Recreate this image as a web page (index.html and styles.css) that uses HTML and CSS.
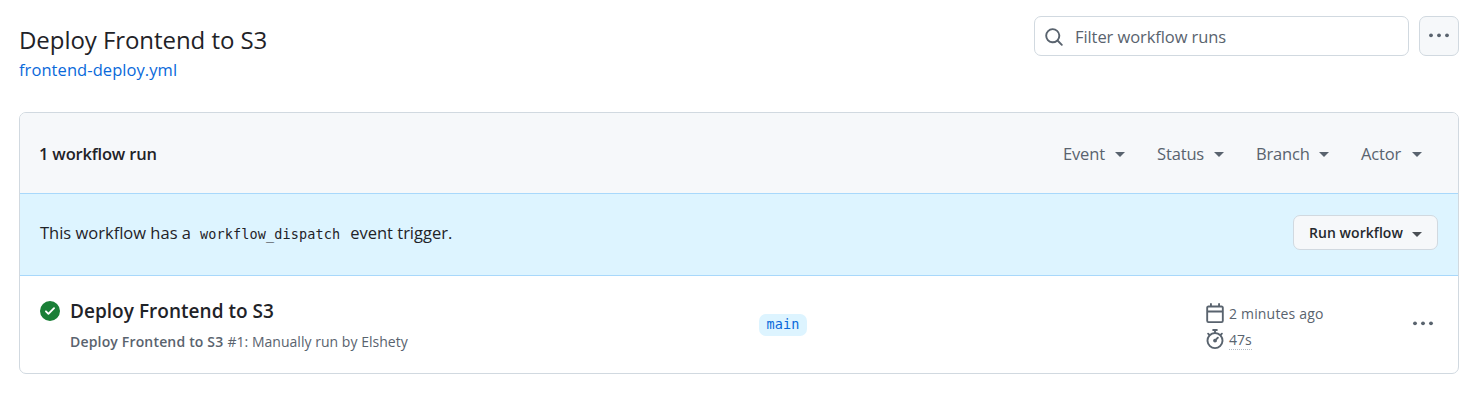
FILE: index.html
```html
<!DOCTYPE html>
<html lang="en">
<head>
<meta charset="utf-8">
<title>Workflow runs</title>
<link rel="stylesheet" href="styles.css">
</head>
<body>
<header class="page-head">
  <div class="heading">
    <h1 class="title"><span class="t">Deploy Frontend to S3</span></h1>
    <a class="file"><span class="t">frontend-deploy.yml</span></a>
  </div>
  <div class="tools">
    <div class="search">
      <svg class="icon" width="20" height="20" viewBox="0 0 16 16"><path d="M10.68 11.74a6 6 0 0 1-7.922-8.982 6 6 0 0 1 8.982 7.922l3.04 3.04a.749.749 0 0 1-.326 1.275.749.749 0 0 1-.734-.215ZM11.5 7a4.499 4.499 0 1 0-8.997 0A4.499 4.499 0 0 0 11.5 7Z"/></svg>
      <span class="placeholder t">Filter workflow runs</span>
    </div>
    <button class="kebab-button"><svg class="icon" width="24" height="20" viewBox="0 0 24 20"><circle cx="4" cy="10.3" r="1.9"/><circle cx="12" cy="10.3" r="1.9"/><circle cx="20" cy="10.3" r="1.9"/></svg></button>
  </div>
</header>
<main class="box">
  <div class="box-head">
    <strong class="count"><span class="t">1 workflow run</span></strong>
    <nav class="filters">
      <span class="filter event"><span class="t">Event</span><i class="caret"></i></span>
      <span class="filter status"><span class="t">Status</span><i class="caret"></i></span>
      <span class="filter branch-filter"><span class="t">Branch</span><i class="caret"></i></span>
      <span class="filter actor"><span class="t">Actor</span><i class="caret"></i></span>
    </nav>
  </div>
  <div class="dispatch">
    <p class="notice"><span class="t lead">This workflow has a</span><code class="code t">workflow_dispatch</code><span class="t">event trigger.</span></p>
    <button class="run"><span class="t">Run workflow</span><i class="caret"></i></button>
  </div>
  <div class="row">
    <svg class="check" width="20" height="20" viewBox="0 0 16 16"><path d="M8 16A8 8 0 1 1 8 0a8 8 0 0 1 0 16Zm3.78-9.72a.751.751 0 0 0-.018-1.042.751.751 0 0 0-1.042-.018L6.75 9.19 5.28 7.72a.751.751 0 0 0-1.042.018.751.751 0 0 0-.018 1.042l2 2a.75.75 0 0 0 1.06 0Z"/></svg>
    <div class="run-info">
      <div class="run-title"><span class="t">Deploy Frontend to S3</span></div>
      <div class="run-sub"><b class="t">Deploy Frontend to S3</b><span class="t">#1: Manually run by Elshety</span></div>
    </div>
    <div class="branch-col"><span class="branch">main</span></div>
    <div class="meta">
      <div class="meta-line"><svg class="icon" width="20" height="20" viewBox="0 0 16 16"><path d="M4.75 0a.75.75 0 0 1 .75.75V2h5V.75a.75.75 0 0 1 1.5 0V2h1.25c.966 0 1.75.784 1.75 1.75v10.5A1.75 1.75 0 0 1 13.25 16H2.75A1.75 1.75 0 0 1 1 14.25V3.75C1 2.784 1.784 2 2.75 2H4V.75A.75.75 0 0 1 4.75 0ZM2.5 7.5v6.75c0 .138.112.25.25.25h10.5a.25.25 0 0 0 .25-.25V7.5Zm10.75-4H2.75a.25.25 0 0 0-.25.25V6h11V3.75a.25.25 0 0 0-.25-.25Z"/></svg><span class="t ago">2 minutes ago</span></div>
      <div class="meta-line"><svg class="icon" width="20" height="20" viewBox="0 0 16 16"><path d="M5.75.75A.75.75 0 0 1 6.5 0h3a.75.75 0 0 1 0 1.5h-.75v1l-.001.041a6.724 6.724 0 0 1 3.464 1.435l.007-.006.75-.75a.749.749 0 0 1 1.275.326.749.749 0 0 1-.215.734l-.75.75-.006.007a6.75 6.75 0 1 1-10.548 0L2.72 5.03l-.75-.75a.751.751 0 0 1 .018-1.042.751.751 0 0 1 1.042-.018l.75.75.007.006A6.72 6.72 0 0 1 7.25 2.541V1.5H6.5a.75.75 0 0 1-.75-.75ZM8 14.5a5.25 5.25 0 1 0-.001-10.501A5.25 5.25 0 0 0 8 14.5Zm.389-6.7 1.33-1.33a.75.75 0 1 1 1.061 1.06L9.45 8.861A1.503 1.503 0 0 1 8 10.75a1.499 1.499 0 1 1 .389-2.95Z"/></svg><span class="t duration">47s</span></div>
    </div>
    <svg class="icon row-kebab" width="24" height="20" viewBox="0 0 24 20"><circle cx="4" cy="10.3" r="1.9"/><circle cx="12" cy="10.3" r="1.9"/><circle cx="20" cy="10.3" r="1.9"/></svg>
  </div>
</main>
</body>
</html>
```
FILE: styles.css
```css
* { box-sizing: border-box; }
body { margin: 0; background: #fff; color: #1f2328; font-family: "Open Sans", "Noto Sans", sans-serif; font-size: 16.5px; line-height: 26px; padding: 16px 23px 0 19px; }
h1, p { margin: 0; font-weight: 400; }
button { font-family: inherit; color: inherit; padding: 0; }
.t { white-space: nowrap; }
.icon { fill: #59636e; flex: none; display: block; }
.page-head { display: flex; justify-content: space-between; height: 96px; }
.heading { padding-top: 6px; }
.title { font-size: 24px; line-height: 36px; letter-spacing: -0.06px; }
.file { display: block; color: #0969da; line-height: 24px; letter-spacing: 0.07px; }
.tools { display: flex; gap: 10px; }
.search { width: 375px; height: 40px; border: 1px solid #d1d9e0; border-radius: 7px; display: flex; align-items: center; padding: 1px 9px 0; gap: 11px; color: #59636e; }
.placeholder { letter-spacing: -0.08px; }
.kebab-button { width: 40px; height: 40px; border: 1px solid #d1d9e0; border-radius: 7px; background: #f6f8fa; display: flex; justify-content: center; align-items: center; padding-bottom: 2px; }
.box { width: 1440px; height: 262px; border: 1px solid #d1d9e0; border-radius: 7px; overflow: hidden; }
.box-head { height: 80px; background: #f6f8fa; display: flex; justify-content: space-between; align-items: center; padding: 2px 36px 0 19px; }
.count { font-weight: 600; letter-spacing: -0.18px; }
.filters { display: flex; color: #59636e; letter-spacing: -0.15px; }
.filter { display: flex; justify-content: space-between; align-items: center; }
.event { width: 62px; margin-right: 32px; }
.status { width: 67px; margin-right: 32px; }
.branch-filter { width: 73px; margin-right: 32px; }
.actor { width: 61px; }
.caret { border: 5px solid transparent; border-top-color: currentColor; border-bottom: 0; }
.dispatch { height: 83px; background: #ddf4ff; border-top: 1px solid #a8d8fb; border-bottom: 1px solid #a8d8fb; display: flex; justify-content: space-between; align-items: center; padding: 0 20px; }
.notice { display: flex; align-items: baseline; letter-spacing: 0; padding-bottom: 3px; }
.code { font-family: "DejaVu Sans Mono", monospace; font-size: 13.5px; letter-spacing: 0.12px; margin: 0 10px 0 9px; }
.run { width: 145px; height: 35px; margin-bottom: 4px; border: 1px solid #d1d9e0; border-radius: 7px; background: #f6f8fa; color: #25292e; font-size: 14px; font-weight: 600; letter-spacing: 0.05px; display: flex; align-items: center; justify-content: space-between; padding: 0 15px; }
.run .caret { margin-top: 3px; color: #4a4f55; }
.row { height: 97px; display: flex; padding-left: 20px; }
.check { fill: #1a7f37; margin-top: 25px; flex: none; }
.run-info { width: 689px; padding: 21px 0 0 10px; }
.run-title { font-size: 19px; font-weight: 600; line-height: 28px; letter-spacing: 0.03px; }
.run-sub { font-size: 14px; color: #59636e; line-height: 20px; margin-top: 7px; display: flex; gap: 4px; }
.run-sub b { font-weight: 600; letter-spacing: 0.17px; }
.run-sub span { letter-spacing: 0.03px; }
.branch-col { width: 447px; padding: 38px 0 0 10px; }
.branch { display: block; width: 48px; height: 22px; border-radius: 7px; background: #ddf4ff; color: #0969da; font: 13.5px/21px "DejaVu Sans Mono", monospace; letter-spacing: 0.12px; text-align: center; }
.meta { width: 215px; padding: 25px 0 0 9px; color: #59636e; font-size: 14px; }
.meta-line { display: flex; align-items: center; gap: 4px; height: 26px; }
.meta-line .icon { margin-bottom: 2px; }
.ago { letter-spacing: 0.18px; }
.duration { border-bottom: 1px dotted #b5bcc4; line-height: 19px; }
.row-kebab { margin-top: 37px; }
```
